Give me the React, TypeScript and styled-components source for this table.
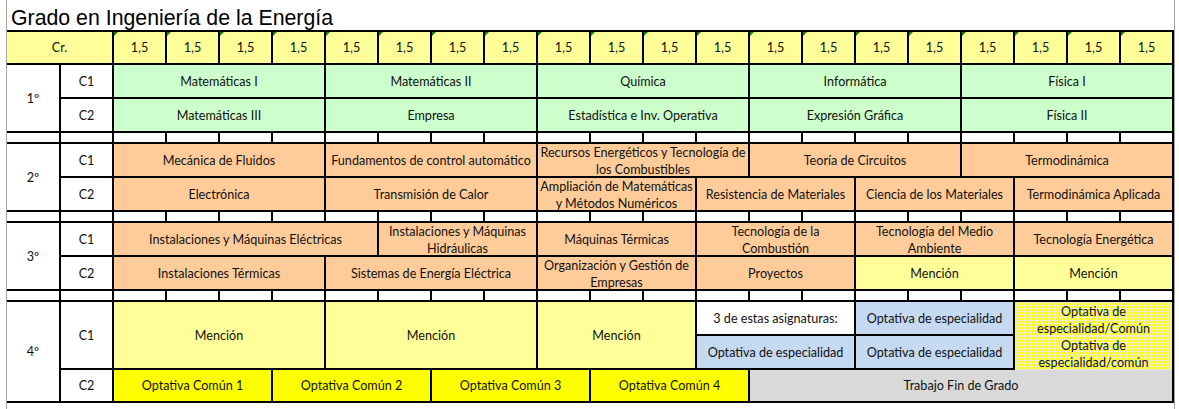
import React, { Fragment } from 'react';
import styled, { createGlobalStyle, css } from 'styled-components';

/* styled */
const GlobalStyle = createGlobalStyle`
  html, body {
    margin: 0;
    padding: 0;
    background: #ffffff;
  }
`

const Sheet = styled.div`
  margin-left: 6px;
  width: 1167px;
  min-height: 409px;
  border-left: 1px solid #a6a6a6;
  border-right: 1px solid #a6a6a6;
  background: #ffffff;
`

const Title = styled.h1`
  margin: 0;
  height: 30px;
  box-sizing: border-box;
  padding: 6px 0 0 4px;
  font-family: 'Liberation Sans', Arial, sans-serif;
  font-size: 21.3px;
  font-weight: normal;
  line-height: 24px;
  color: #000000;
`

const Grid = styled.div`
  display: grid;
  grid-template-columns: 52px repeat(21, 51px);
  grid-template-rows: 31px 32px 32px 9px 32px 32px 9px 32px 32px 9px 32px 32px 31px;
  gap: 2px;
  padding: 2px 2px 2px 0;
  background: #000000;
  width: fit-content;
`

type Tone = 'plain' | 'head' | 'green' | 'orange' | 'mention' | 'common' | 'blue' | 'grey' | 'pattern';

const tones: Record<Tone, string> = {
  plain: '#ffffff',
  head: '#ffff99',
  green: '#ccffcc',
  orange: '#ffcc99',
  mention: '#ffff99',
  common: '#ffff00',
  blue: '#c5d9f1',
  grey: '#d9d9d9',
  pattern: '#ffff00',
}

const Cell = styled.div<{ $tone: Tone; $row: number; $col: number; $span: number; $rowSpan: number; $wrapped: boolean }>`
  grid-row: ${p => p.$row} / span ${p => p.$rowSpan};
  grid-column: ${p => p.$col} / span ${p => p.$span};
  display: flex;
  align-items: center;
  justify-content: center;
  min-width: 0;
  box-sizing: border-box;
  padding-top: ${p => (p.$wrapped ? '2px' : '0')};
  overflow: hidden;
  position: relative;
  background: ${p => tones[p.$tone]};
  font-family: Lato, 'Noto Sans', sans-serif;
  font-size: 12.6px;
  line-height: 17px;
  color: #111111;
  text-align: center;
  white-space: pre;

  ${p => p.$tone === 'head' && p.$col > 2 && css`
    &::before {
      content: '';
      position: absolute;
      top: 0;
      left: 0;
      border-top: 4px solid #17801c;
      border-right: 4px solid transparent;
    }
  `}

  ${p => p.$tone === 'pattern' && css`
    overflow: visible;
    align-items: flex-start;
    padding-top: 0;
    z-index: 1;
  `}
`

const PatternText = styled.div`
  width: 100%;
  height: 34px;
  padding-top: 1px;
  box-sizing: border-box;
  overflow: hidden;
  background-color: #ffff00;
  background-image:
    linear-gradient(to right, rgba(236, 236, 220, 0.9) 1px, transparent 1px),
    linear-gradient(to bottom, rgba(236, 236, 220, 0.9) 1px, transparent 1px);
  background-size: 3px 3px;
`

type CellDef = { text: string; row: number; col: number; span?: number; rowSpan?: number; tone: Tone };

const cells: CellDef[] = [];

// cabecera de créditos
cells.push({ text: 'Cr.', row: 1, col: 1, span: 2, tone: 'head' });
for (let c = 3; c <= 22; c++) cells.push({ text: '1,5', row: 1, col: c, tone: 'head' });

// filas separadoras
[4, 7, 10].forEach(row => {
  for (let c = 1; c <= 22; c++) cells.push({ text: '', row, col: c, tone: 'plain' });
});

// un cuatrimestre: asignaturas a partir de la columna 3
const lane = (row: number, items: [string, number, Tone][]) => {
  let col = 3;
  items.forEach(([text, span, tone]) => {
    cells.push({ text, row, col, span, tone });
    col += span;
  });
};

cells.push({ text: '1º', row: 2, col: 1, rowSpan: 2, tone: 'plain' });
cells.push({ text: 'C1', row: 2, col: 2, tone: 'plain' });
cells.push({ text: 'C2', row: 3, col: 2, tone: 'plain' });
lane(2, [['Matemáticas I', 4, 'green'], ['Matemáticas II', 4, 'green'], ['Química', 4, 'green'], ['Informática', 4, 'green'], ['Física I', 4, 'green']]);
lane(3, [['Matemáticas III', 4, 'green'], ['Empresa', 4, 'green'], ['Estadística e Inv. Operativa', 4, 'green'], ['Expresión Gráfica', 4, 'green'], ['Física II', 4, 'green']]);

cells.push({ text: '2º', row: 5, col: 1, rowSpan: 2, tone: 'plain' });
cells.push({ text: 'C1', row: 5, col: 2, tone: 'plain' });
cells.push({ text: 'C2', row: 6, col: 2, tone: 'plain' });
lane(5, [['Mecánica de Fluidos', 4, 'orange'], ['Fundamentos de control automático', 4, 'orange'], ['Recursos Energéticos y Tecnología de\nlos Combustibles', 4, 'orange'], ['Teoría de Circuitos', 4, 'orange'], ['Termodinámica', 4, 'orange']]);
lane(6, [['Electrónica', 4, 'orange'], ['Transmisión de Calor', 4, 'orange'], ['Ampliación de Matemáticas\ny Métodos Numéricos', 3, 'orange'], ['Resistencia de Materiales', 3, 'orange'], ['Ciencia de los Materiales', 3, 'orange'], ['Termodinámica Aplicada', 3, 'orange']]);

cells.push({ text: '3º', row: 8, col: 1, rowSpan: 2, tone: 'plain' });
cells.push({ text: 'C1', row: 8, col: 2, tone: 'plain' });
cells.push({ text: 'C2', row: 9, col: 2, tone: 'plain' });
lane(8, [['Instalaciones y Máquinas Eléctricas', 5, 'orange'], ['Instalaciones y Máquinas\nHidráulicas', 3, 'orange'], ['Máquinas Térmicas', 3, 'orange'], ['Tecnología de la\nCombustión', 3, 'orange'], ['Tecnología del Medio\nAmbiente', 3, 'orange'], ['Tecnología Energética', 3, 'orange']]);
lane(9, [['Instalaciones Térmicas', 4, 'orange'], ['Sistemas de Energía Eléctrica', 4, 'orange'], ['Organización y Gestión de\nEmpresas', 3, 'orange'], ['Proyectos', 3, 'orange'], ['Mención', 3, 'mention'], ['Mención', 3, 'mention']]);

cells.push({ text: '4º', row: 11, col: 1, rowSpan: 3, tone: 'plain' });
cells.push({ text: 'C1', row: 11, col: 2, rowSpan: 2, tone: 'plain' });
cells.push({ text: 'C2', row: 13, col: 2, tone: 'plain' });
cells.push({ text: 'Mención', row: 11, col: 3, span: 4, rowSpan: 2, tone: 'mention' });
cells.push({ text: 'Mención', row: 11, col: 7, span: 4, rowSpan: 2, tone: 'mention' });
cells.push({ text: 'Mención', row: 11, col: 11, span: 3, rowSpan: 2, tone: 'mention' });
cells.push({ text: '3 de estas asignaturas:', row: 11, col: 14, span: 3, tone: 'plain' });
cells.push({ text: 'Optativa de especialidad', row: 12, col: 14, span: 3, tone: 'blue' });
cells.push({ text: 'Optativa de especialidad', row: 11, col: 17, span: 3, tone: 'blue' });
cells.push({ text: 'Optativa de especialidad', row: 12, col: 17, span: 3, tone: 'blue' });
cells.push({ text: 'Optativa de\nespecialidad/Común', row: 11, col: 20, span: 3, tone: 'pattern' });
cells.push({ text: 'Optativa de\nespecialidad/común', row: 12, col: 20, span: 3, tone: 'pattern' });
lane(13, [['Optativa Común 1', 3, 'common'], ['Optativa Común 2', 3, 'common'], ['Optativa Común 3', 3, 'common'], ['Optativa Común 4', 3, 'common'], ['Trabajo Fin de Grado', 8, 'grey']]);

const App = () => {
  return (
    <Fragment>
      <GlobalStyle />
      <Sheet>
        <Title>Grado en Ingeniería de la Energía</Title>
        <Grid>
          {cells.map((cell, index) => (
            <Cell
              key={index}
              $tone={cell.tone}
              $row={cell.row}
              $col={cell.col}
              $span={cell.span || 1}
              $rowSpan={cell.rowSpan || 1}
              $wrapped={cell.text.includes('\n')}
            >
              {cell.tone === 'pattern' ? <PatternText>{cell.text}</PatternText> : cell.text}
            </Cell>
          ))}
        </Grid>
      </Sheet>
    </Fragment>
  );
};

export default App;
